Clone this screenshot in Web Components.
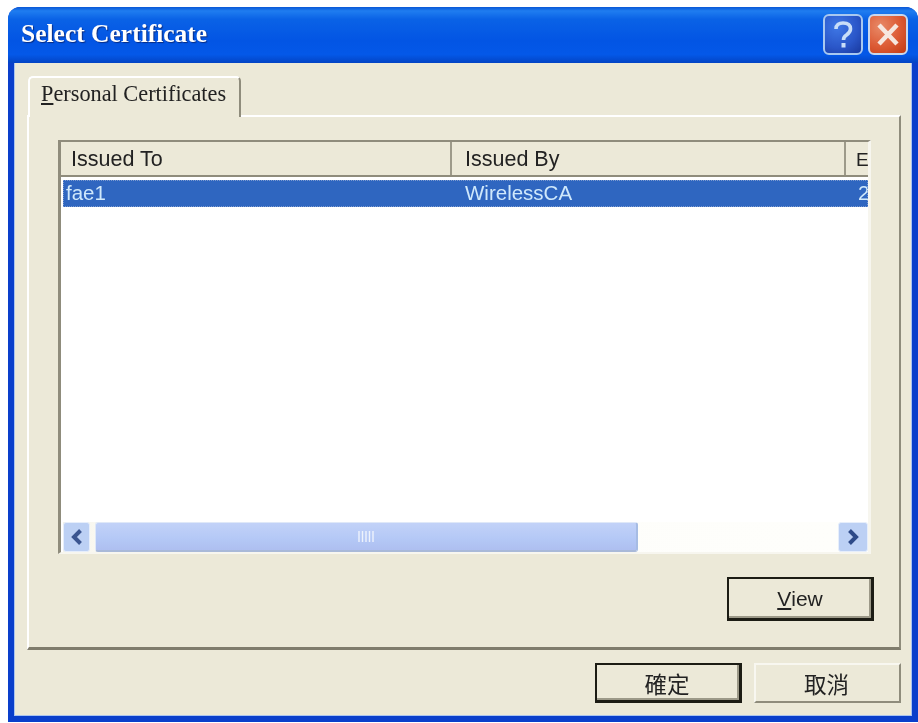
<!DOCTYPE html>
<html><head><meta charset="utf-8">
<style>
html,body{margin:0;padding:0;background:#fff;overflow:hidden}
body{padding:7px 0 1px 8px;height:715px;font-family:"Liberation Sans",Arial,sans-serif}
</style></head><body>
<x-window>
  <x-titlebar slot="title">Select Certificate</x-titlebar>
  <x-tabpanel label="ersonal Certificates" key="P">
    <x-listview></x-listview>
    <div style="display:flex;justify-content:flex-end;margin-top:23px">
      <x-button default><u>V</u>iew</x-button>
    </div>
  </x-tabpanel>
  <div slot="footer" style="display:flex;justify-content:flex-end;gap:12px">
    <x-button default cjk>確定</x-button>
    <x-button cjk flat>取消</x-button>
  </div>
</x-window>
<script>
function def(name,html){
  customElements.define(name,class extends HTMLElement{
    constructor(){super();const s=this.attachShadow({mode:'open'});s.innerHTML=typeof html==='function'?html(this):html;}
  });
}
def('x-window',`<style>
:host{display:flex;flex-direction:column;width:910px;height:715px;box-sizing:border-box;background:#0a3fcb;border-radius:12px 12px 0 0;overflow:hidden;filter:blur(.35px)}
.client{flex:1;display:flex;flex-direction:column;margin:0 6px 6px 6px;background:#ece9d8;padding:13px 10px 12px 12px;border-left:1px solid #a9c4f0;border-right:1px solid #a9c4f0;border-bottom:1px solid #a9c4f0;min-height:0}
.foot{margin-top:13px}
</style><slot name="title"></slot><div class="client"><slot></slot><div class="foot"><slot name="footer"></slot></div></div>`);
def('x-titlebar',`<style>
:host{display:flex;align-items:center;justify-content:space-between;height:56px;flex:none;box-sizing:border-box;padding:0 10px 2px 13px;
background:linear-gradient(180deg,#0a57d6 0,#1f7df0 7%,#0a62e6 22%,#0355e4 60%,#0458e8 85%,#0344c4 100%)}
.t{font:bold 25.500px "Liberation Serif",serif;color:#fff;text-shadow:1px 1px 1px #0a2c80;white-space:nowrap}
.btns{display:flex;gap:5px}
svg{display:block}
</style><span class="t"><slot></slot></span><span class="btns">
<svg width="40" height="41" viewBox="0 0 40 41"><defs><radialGradient id="h" cx=".35" cy=".3" r=".9"><stop offset="0" stop-color="#3f78e6"/><stop offset=".6" stop-color="#2a56c8"/><stop offset="1" stop-color="#1a3aa0"/></radialGradient></defs>
<rect x="1" y="1" width="38" height="39" rx="5" fill="url(#h)" stroke="#a8c8f0" stroke-width="2"/>
<path d="M13 15c0-4 3-6 7-6 4.500 0 7.500 2 7.500 6 0 3-2 4.500-4 6-2 1.300-3 2.500-3 5" fill="none" stroke="#c9def8" stroke-width="3.600"/><rect x="18.500" y="29" width="4" height="4.500" fill="#c9def8"/></svg>
<svg width="40" height="41" viewBox="0 0 40 41"><defs><radialGradient id="c" cx=".3" cy=".3" r=".95"><stop offset="0" stop-color="#e88a68"/><stop offset=".55" stop-color="#dc5a34"/><stop offset="1" stop-color="#c23a14"/></radialGradient></defs>
<rect x="1" y="1" width="38" height="39" rx="5" fill="url(#c)" stroke="#c8d8ee" stroke-width="2"/>
<path d="M11 11l18 19M29 11L11 30" stroke="#f6e6de" stroke-width="4.500"/></svg></span>`);
def('x-tabpanel',h=>`<style>
:host{display:flex;flex-direction:column;flex:1;min-height:0}
.tab{align-self:flex-start;position:relative;z-index:1;margin-bottom:-2px;width:213px;height:41px;box-sizing:border-box;margin-left:1px;background:#ece9d8;
border-left:2px solid #fff;border-top:2px solid #fff;border-right:2px solid #8f8c7c;border-radius:5px 5px 0 0;padding:3px 0 0 11px;
font:22.300px "Liberation Serif",serif;color:#222;white-space:nowrap}
.panel{flex:1;min-height:0;display:flex;flex-direction:column;box-sizing:border-box;border-left:2px solid #fff;border-top:2px solid #fff;border-right:2px solid #8f8c7c;border-bottom:3px solid #7f7c6c;padding:23px 25px 25px 29px}
</style><div class="tab"><u>${h.getAttribute('key')}</u>${h.getAttribute('label')}</div><div class="panel"><slot></slot></div>`);
def('x-listview',`<style>
:host{display:flex;flex-direction:column;height:414px;flex:none;box-sizing:border-box;margin-right:3px;background:#fff;border-top:2px solid #8f8c7c;border-left:3px solid #8f8c7c;border-right:3px solid #f7f6ef;border-bottom:2px solid #f7f6ef;font:21.500px "Liberation Sans",sans-serif;color:#222}
.head,.row{display:grid;grid-template-columns:391px 394px 1fr;overflow:hidden;white-space:nowrap}
.head{height:33px;background:#ece9d8;border-bottom:2px solid #8f8c7c;flex:none}
.head div{box-sizing:border-box;padding:5px 0 0 10px;border-right:2px solid #9d9a8a;overflow:hidden}
.head div:nth-child(2){padding-left:13px}
.head div:last-child{border-right:0;padding:7px 0 0 10px;font-size:19px}
.row{margin:3px 0 0 2px;height:27px;background:#2f66c0;color:#cfe8fb;outline:1px dotted #7d9bd0;outline-offset:-1px;flex:none;line-height:26px;font-size:20.500px}
.row div{overflow:hidden;padding-left:3px}
.row div:nth-child(2){padding-left:11px}
.row div:last-child{padding-left:10px}
.body{flex:1}
</style><div class="head"><div>Issued To</div><div>Issued By</div><div>E</div></div>
<div class="row"><div>fae1</div><div>WirelessCA</div><div>2</div></div>
<div class="body"></div><x-hscroll></x-hscroll>`);
def('x-hscroll',`<style>
:host{display:flex;align-items:stretch;height:30px;flex:none;margin-left:2px;background:linear-gradient(90deg,#f5f3e8,#fdfdfa 8%,#fefefb)}
.b{width:27px;flex:none;background:#bcd0f4;border:1px solid #e6eefb;border-radius:3px;box-sizing:border-box;display:flex;align-items:center;justify-content:center}
.th{width:543px;margin-left:5px;flex:none;box-sizing:border-box;background:linear-gradient(180deg,#c2d2f8,#b4c8f6 60%,#aebff0);border:1px solid #dfe8f8;border-right:2px solid #a6bce4;border-bottom:2px solid #a9b9d8;border-radius:3px;display:flex;align-items:center;justify-content:center}
.sp{flex:1}
svg{display:block}
</style><div class="b"><svg width="14" height="18" viewBox="0 0 14 18"><path d="M10.500 2.500L4 9l6.500 6.500" fill="none" stroke="#3a5590" stroke-width="4"/></svg></div>
<div class="th"><svg width="16" height="11" viewBox="0 0 16 11"><path d="M1 0v11M4.500 0v11M8 0v11M11.500 0v11M15 0v11" stroke="#eef3fc" stroke-width="1.400"/></svg></div>
<div class="sp"></div>
<div class="b" style="width:30px"><svg width="14" height="18" viewBox="0 0 14 18"><path d="M3.500 2.500L10 9l-6.500 6.500" fill="none" stroke="#2e4a88" stroke-width="4"/></svg></div>`);
def('x-button',h=>`<style>
:host{display:flex;align-items:center;justify-content:center;width:147px;box-sizing:border-box;background:#ece9d8;color:#222;
font:21px "Liberation Sans","Noto Sans CJK TC",sans-serif;height:${h.hasAttribute('cjk')?40:44}px;
${h.hasAttribute('flat')?'border:2px solid;border-color:#f8f7f0 #8f8c7c #8f8c7c #f8f7f0;':'border:2px solid #1c1c14;border-bottom-width:3px;border-right-width:3px;box-shadow:inset -2px -2px 0 #9c9988;'}}
:host([cjk]){font-size:22.500px;padding-right:2px}
::slotted(u){text-underline-offset:2px}
</style><slot></slot>`);
</script>
</body></html>
